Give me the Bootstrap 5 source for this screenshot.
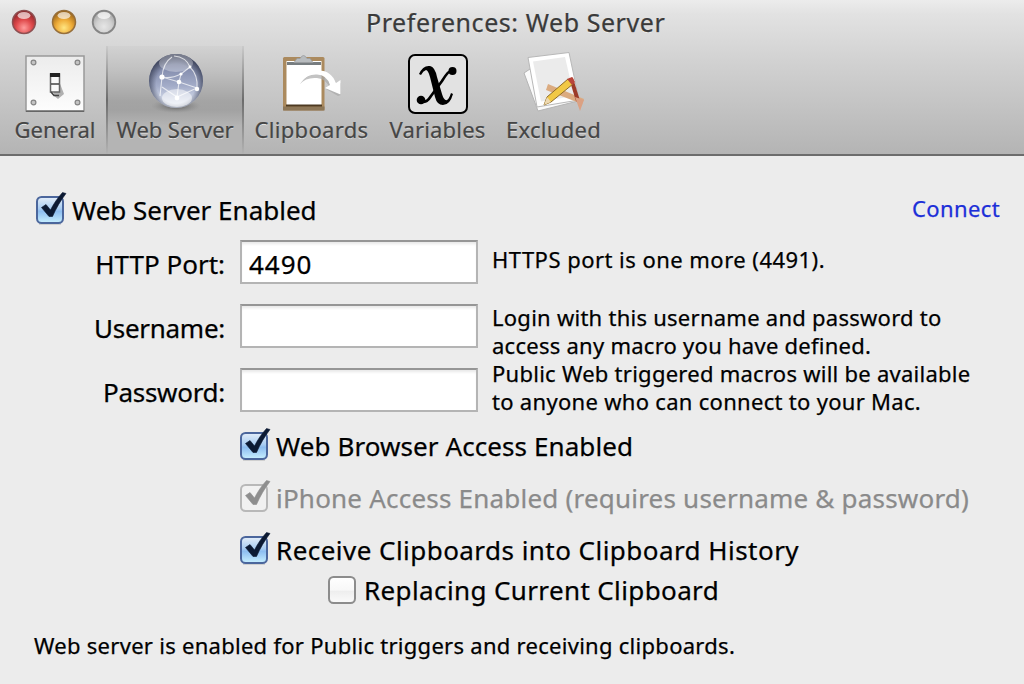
<!DOCTYPE html>
<html lang="en">
<head>
<meta charset="utf-8">
<meta name="viewport" content="width=device-width, initial-scale=1">
<title>Preferences: Web Server</title>
<link href="https://cdn.jsdelivr.net/npm/bootstrap@5.3.0/dist/css/bootstrap.min.css" rel="stylesheet">
<style>
body{font-family:"Noto Sans","Open Sans",sans-serif;background:#ececec;color:#000;width:1024px;height:684px;overflow:hidden;-webkit-text-stroke:.25px currentColor}
.fit{white-space:nowrap;display:inline-block}
.win-head{height:156px;background:linear-gradient(#ececec 0,#e2e2e2 14px,#d2d2d2 60px,#b4b4b4 154px);border-bottom:2px solid #6c6c6c}
.titlebar{height:46px}
.lights{left:11px;top:9px;gap:14px}
.win-title{font-size:25px;line-height:44px;color:#3a3a3a;text-shadow:0 1px 0 #f2f2f2;margin-left:366px;letter-spacing:.56px}
.tool{height:108px;padding-top:5px;color:#454545;font-size:22px}
.tool svg{display:block;width:64px;height:64px}
.tool .fit{line-height:28px;text-shadow:0 1px 0 #e4e4e4}
.tool.active-tool{background:linear-gradient(#d2d2d2 0,#c0c0c0 25px,#a4a4a4 55px,#a2a2a2 64px,#b4b4b4 80px,#b4b4b4);border-left:2px solid;border-right:2px solid;border-image:linear-gradient(#ccc,#6c6c6c 50%,#b4b4b4) 1}
.pane{height:528px;padding-top:32px}
.big{font-size:26px;line-height:44px}
.help{font-size:22px;line-height:28px}
.form-grid{display:grid;grid-template-columns:225px 238px 1fr;grid-template-rows:44px 44px 44px;gap:20px 15px}
.form-grid .lbl{text-align:right;padding-top:2px}
.form-grid .help{margin-left:-1px}
.field{border-radius:0;border:2px solid #b4b4b4;border-top-color:#969696;padding:3px 7px 0;height:44px;font-size:26px;letter-spacing:1px;background:#fff;box-shadow:inset 0 3px 3px -1px #e8e8e8;color:#000}
.chk{width:36px;height:36px;flex:none;display:block;margin-top:-2px}
.link-blue{color:#1c2fd8}
</style>
</head>
<body>
<svg width="0" height="0" class="position-absolute">
<defs>
<linearGradient id="blue" x1="0" y1="0" x2="0" y2="1"><stop offset="0" stop-color="#e4eef9"/><stop offset=".45" stop-color="#a9cdf2"/><stop offset=".55" stop-color="#8dbdf0"/><stop offset="1" stop-color="#c8f0ff"/></linearGradient>
<linearGradient id="plain" x1="0" y1="0" x2="0" y2="1"><stop offset="0" stop-color="#fff"/><stop offset=".5" stop-color="#f8f8f8"/><stop offset=".55" stop-color="#eee"/><stop offset="1" stop-color="#fbfbfb"/></linearGradient>
<symbol id="on" viewBox="0 0 36 36"><rect x="1" y="6" width="26" height="26" rx="4.5" fill="url(#blue)" stroke="#4b669c" stroke-width="2"/><path d="M3 33.500h22" stroke="#cfcfcf"/><path d="M5.500 16.500 10 13.500 14.500 19C17.500 13 21.500 7 26.500 1.500L30 2.500C24.500 9.500 20 17.500 16.500 25.500H13Z" fill="#0c1a33" stroke="#0c1a33" stroke-width=".6"/></symbol>
<symbol id="dim" viewBox="0 0 36 36"><rect x="1" y="6" width="26" height="26" rx="4.500" fill="#f1f1f1" stroke="#b8b8b8" stroke-width="2"/><path d="M5.500 16.500 10 13.500 14.500 19C17.500 13 21.500 7 26.500 1.500L30 2.500C24.500 9.500 20 17.500 16.500 25.500H13Z" fill="#8e8e8e" stroke="#8e8e8e" stroke-width=".6"/></symbol>
<symbol id="off" viewBox="0 0 36 36"><rect x="1" y="6" width="26" height="26" rx="4.500" fill="url(#plain)" stroke="#8c8c8c" stroke-width="2"/></symbol>
</defs>
</svg>
<header class="win-head">
<div class="titlebar position-relative">
<div class="lights position-absolute d-flex">
<svg width="26" height="27" viewBox="0 0 26 27"><defs><radialGradient id="r" cx=".5" cy=".75" r=".7"><stop offset="0" stop-color="#ff9c9c"/><stop offset=".5" stop-color="#e04a4c"/><stop offset="1" stop-color="#8e2428"/></radialGradient></defs><circle cx="13" cy="13" r="11.500" fill="url(#r)" stroke="#8d5052" stroke-width="1.500"/><ellipse cx="13" cy="6.500" rx="6.500" ry="3.500" fill="#fff" opacity=".65"/></svg>
<svg width="26" height="27" viewBox="0 0 26 27"><defs><radialGradient id="y" cx=".5" cy=".75" r=".7"><stop offset="0" stop-color="#ffe682"/><stop offset=".5" stop-color="#efac38"/><stop offset="1" stop-color="#9c6418"/></radialGradient></defs><circle cx="13" cy="13" r="11.500" fill="url(#y)" stroke="#966f3c" stroke-width="1.500"/><ellipse cx="13" cy="6.500" rx="6.500" ry="3.500" fill="#fff" opacity=".65"/></svg>
<svg width="26" height="27" viewBox="0 0 26 27"><defs><radialGradient id="g" cx=".5" cy=".7" r=".7"><stop offset="0" stop-color="#e6e6e6"/><stop offset=".5" stop-color="#cfcfcf"/><stop offset="1" stop-color="#9c9c9c"/></radialGradient></defs><circle cx="13" cy="13" r="11.300" fill="url(#g)" stroke="#858585" stroke-width="1.800"/><ellipse cx="13" cy="6.500" rx="6.500" ry="3.500" fill="#fff" opacity=".7"/></svg>
</div>
<div class="win-title"><span class="fit">Preferences: Web Server</span></div>
</div>
<nav class="d-flex">
<div class="tool d-flex flex-column align-items-center" style="width:106px;padding-left:4px">
<svg viewBox="0 0 64 64"><defs><linearGradient id="pl" x1="0" y1="0" x2="0" y2="1"><stop offset="0" stop-color="#ececec"/><stop offset="1" stop-color="#fdfdfd"/></linearGradient></defs><rect x="3" y="5" width="58" height="55" fill="url(#pl)" stroke="#999" stroke-width="1.500"/><path d="M3 60.300h58" stroke="#666" stroke-width="1.500"/><g fill="#c4c4c4" stroke="#858585" stroke-width="1.200"><circle cx="10.500" cy="11.500" r="2.400"/><circle cx="54.500" cy="11.500" r="2.400"/><circle cx="10.500" cy="51.500" r="2.400"/><circle cx="54.500" cy="51.500" r="2.400"/></g><path d="M36 30 41 43 35 48 30 44Z" fill="#b0b0b0"/><rect x="27.500" y="23" width="9" height="18" fill="#fafafa" stroke="#666" stroke-width="1.500"/><rect x="27" y="22" width="10" height="4" fill="#222"/><path d="M28 33h8M28 41 31 44.500h5" stroke="#444" stroke-width="1.500" fill="none"/></svg>
<span class="fit">General</span></div>
<div class="tool active-tool d-flex flex-column align-items-center" style="width:138px">
<svg viewBox="0 0 64 64"><defs><linearGradient id="gl" x1="0" y1="0" x2="0" y2="1"><stop offset="0" stop-color="#5c637c"/><stop offset=".3" stop-color="#8790b0"/><stop offset=".6" stop-color="#a4adc9"/><stop offset="1" stop-color="#eef3fb"/></linearGradient><radialGradient id="rim" cx=".5" cy=".55" r=".52"><stop offset=".7" stop-color="#3c4258" stop-opacity="0"/><stop offset="1" stop-color="#343a50" stop-opacity=".75"/></radialGradient><radialGradient id="shade"><stop offset="0" stop-color="#555"/><stop offset="1" stop-color="#888" stop-opacity="0"/></radialGradient></defs><ellipse cx="33" cy="55" rx="25" ry="7" fill="url(#shade)"/><circle cx="33" cy="30" r="27" fill="url(#gl)"/><circle cx="33" cy="30" r="27" fill="url(#rim)"/><ellipse cx="33" cy="12" rx="17" ry="9" fill="#fff" opacity=".3"/><ellipse cx="34" cy="47" rx="15" ry="9" fill="#fff" opacity=".5"/><g fill="none" stroke="#fff" stroke-width="1.100" opacity=".7"><path d="M19 26Q28 28 38 23L47 16M19 26 36 31 54 37M19 26Q20 12 29 6M47 16Q55 24 54 37L34 46 19 36M38 23 36 31 34 46M19 26 17 45M31 5Q43 6 47 16"/></g><g fill="#fff"><circle cx="19" cy="26" r="2.600"/><circle cx="38" cy="23" r="1.600"/><circle cx="36" cy="31" r="2.300"/><circle cx="34" cy="47" r="2.400"/><circle cx="54" cy="38" r="2.200"/><circle cx="47" cy="16" r="1.400"/></g></svg>
<span class="fit" style="letter-spacing:-.09px">Web Server</span></div>
<div class="tool d-flex flex-column align-items-center" style="width:135px">
<svg viewBox="0 0 64 64"><rect x="3" y="6" width="41.500" height="53.500" rx="1.500" fill="#ab8a5e"/><rect x="3" y="55.500" width="41.500" height="4" fill="#8d7758"/><rect x="6.500" y="10" width="35" height="45" fill="#fff"/><path d="M6 54.500h36" stroke="#4d3a22" stroke-width="1.800"/><rect x="7" y="11" width="34" height="3" fill="#777d80"/><path d="M14 11.500 17 7.500H20Q23.500 1.500 27 7.500H30L33 11.500Z" fill="#b8bcbf" stroke="#9a9da0" stroke-width=".8"/><path d="M20 33Q26 26 37 27Q47 28 50 38L46 38 58 45 61 44V32L57 34Q53 22 39 21Q28 21 20 33Z" fill="#aaa" opacity=".7"/><path d="M22 30Q27 23 37 23.500Q47 24 50 34L45 37 60.500 43.500V29L56 32Q51 19.500 39 19.500Q28 20 22 30Z" fill="#fff"/></svg>
<span class="fit" style="letter-spacing:.33px">Clipboards</span></div>
<div class="tool d-flex flex-column align-items-center" style="width:117px">
<svg viewBox="0 0 64 64"><rect x="3" y="4" width="58" height="58" rx="6" fill="#e2e2e2" stroke="#000" stroke-width="2"/><path d="M13 23Q17 14 24 15Q29 16 31 26L36 43Q38 50 41 49Q43 48 45 42L47 43Q44 54 37 54Q31 54 29 46L24 26Q22 19 20 19Q17 20 15 24Z"/><path d="M48 19Q43 18 36 30L25 45Q20 53 15 50" stroke="#000" stroke-width="2.600" fill="none"/><circle cx="46.500" cy="20" r="4"/><circle cx="15" cy="49" r="4.300"/></svg>
<span class="fit" style="letter-spacing:.18px">Variables</span></div>
<div class="tool d-flex flex-column align-items-center" style="width:115px">
<svg viewBox="0 0 64 64"><path d="M2 22 8 18 42 12 56 50 16 60Z" fill="#fafafa" stroke="#b4b4b4"/><path d="M6 6.500 47 1.500 57 49 15 56Z" fill="#fff" stroke="#b8b8b8"/><path d="M11 10.500 43 6 52 45 19 50.500Z" fill="#ebebeb"/><path d="M26 33 62 48 60 53 24 39Z" fill="#dbab80"/><path d="M49 27 56 50" stroke="#9c3a28" stroke-width="4"/><path d="M53 46 62 49 58 60Z" fill="#dba183"/><path d="M46 28 51 33 29 51 22 54 25 46Z" fill="#f1c844" stroke="#8f6c28"/><path d="M25 46 29 51 22 54Z" fill="#eed9b0"/><path d="M45 28 50 26 53 31 50 34Z" fill="#b9453a"/></svg>
<span class="fit" style="letter-spacing:.28px">Excluded</span></div>
</nav>
</header>
<main class="pane">
<div class="d-flex align-items-center justify-content-between big" style="height:44px;padding:0 24px 0 36px">
<label class="d-flex align-items-center"><svg class="chk"><use href="#on"/></svg><span class="fit">Web Server Enabled</span></label>
<a class="help link-blue text-decoration-none pb-1" style="letter-spacing:.38px" href="#"><span class="fit">Connect</span></a>
</div>
<div class="form-grid big mt-2">
<div class="lbl"><span class="fit">HTTP Port:</span></div><input class="form-control field" value="4490">
<div class="help" style="padding-top:5px"><span class="fit" style="letter-spacing:.47px">HTTPS port is one more (4491).</span></div>
<div class="lbl"><span class="fit" style="letter-spacing:-.27px">Username:</span></div><input class="form-control field">
<div class="help" style="height:0;margin-top:-1px;letter-spacing:.26px"><span class="fit">Login with this username and password to</span><br><span class="fit">access any macro you have defined.</span><br><span class="fit">Public Web triggered macros will be available</span><br><span class="fit" style="letter-spacing:.3px">to anyone who can connect to your Mac.</span></div>
<div class="lbl"><span class="fit" style="letter-spacing:-.28px">Password:</span></div><input class="form-control field">
</div>
<div class="big" style="padding:12px 0 0 240px">
<label class="d-flex align-items-center" style="height:44px;letter-spacing:.085px"><svg class="chk"><use href="#on"/></svg><span class="fit">Web Browser Access Enabled</span></label>
<label class="d-flex align-items-center mt-2" style="height:44px;color:#8a8a8a;letter-spacing:.21px"><svg class="chk"><use href="#dim"/></svg><span class="fit">iPhone Access Enabled (requires username &amp; password)</span></label>
<label class="d-flex align-items-center mt-2" style="height:44px;letter-spacing:.46px"><svg class="chk"><use href="#on"/></svg><span class="fit">Receive Clipboards into Clipboard History</span></label>
<label class="d-flex align-items-center" style="height:36px;padding-left:88px;letter-spacing:.38px"><svg class="chk"><use href="#off"/></svg><span class="fit">Replacing Current Clipboard</span></label>
</div>
<div class="help" style="padding:23px 0 0 34px;letter-spacing:.28px"><span class="fit">Web server is enabled for Public triggers and receiving clipboards.</span></div>
</main>
<script src="https://cdn.jsdelivr.net/npm/bootstrap@5.3.0/dist/js/bootstrap.bundle.min.js"></script>
</body>
</html>
